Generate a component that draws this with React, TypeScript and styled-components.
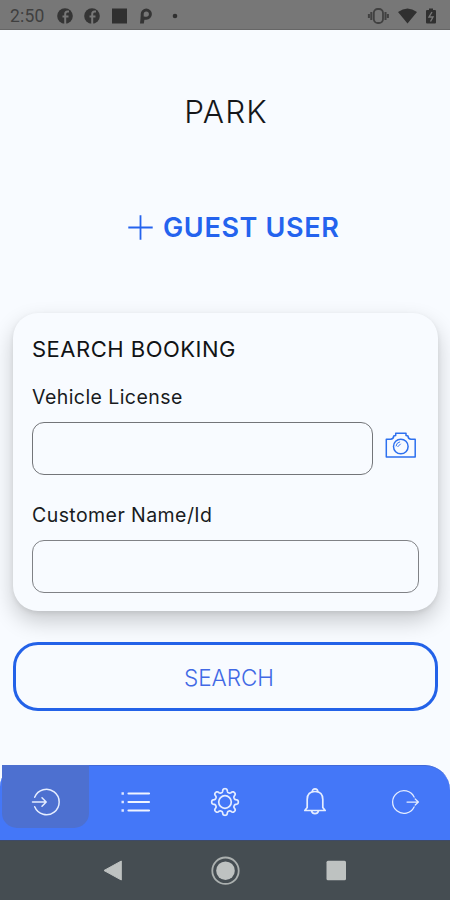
import React from "react";
import styled, { createGlobalStyle } from "styled-components";

const Global = createGlobalStyle`
  * { box-sizing: border-box; }
  body { margin: 0; background: #f8fbff; font-family: Inter, "Liberation Sans", sans-serif; }
`;

const Screen = styled.div`
  width: 450px;
  height: 900px;
  display: flex;
  flex-direction: column;
  background: #f8fbff;
  overflow: hidden;
`;

const StatusBar = styled.header`
  height: 30px;
  flex: none;
  display: flex;
  align-items: center;
  justify-content: space-between;
  padding: 2px 14px 0 10px;
  background: #777777;
  border-bottom: 1px solid #666;
  color: #3f3f3f;
`;

const StatusGroup = styled.div<{ $gap: number }>`
  display: flex;
  align-items: center;
  gap: ${(p) => p.$gap}px;
`;

const Clock = styled.span`
  width: 36px;
  font: 400 17.5px/20px Roboto, sans-serif;
  letter-spacing: 0.2px;
`;

const Glyph = styled.svg`
  display: block;
  flex: none;
  overflow: visible;
`;

const Main = styled.main`
  flex: 1;
  display: flex;
  flex-direction: column;
  padding: 0 12px 0 13px;
`;

const Title = styled.h1`
  margin: 62px 0 0 1px;
  text-align: center;
  font-size: 31.5px;
  font-weight: 300;
  line-height: 40px;
  letter-spacing: 1.1px;
  color: #15171a;
`;

const GuestButton = styled.button`
  margin: 76px 0 0 115px;
  padding: 0;
  height: 40px;
  border: 0;
  background: none;
  display: flex;
  align-items: center;
  gap: 10px;
  color: #2463ee;
  font: 600 27px/40px Inter, sans-serif;
  letter-spacing: 0.65px;
  white-space: nowrap;
`;

const Card = styled.section`
  height: 298px;
  margin-top: 65px;
  padding: 22px 19px 0;
  border-radius: 25px;
  background: #f8fbff;
  box-shadow: 0 10px 22px rgba(0, 0, 0, 0.2), 0 2px 5px rgba(0, 0, 0, 0.08);
`;

const CardTitle = styled.h2`
  margin: 0;
  font-size: 22px;
  font-weight: 400;
  line-height: 28px;
  letter-spacing: 0.5px;
  color: #111315;
`;

const Label = styled.label<{ $top: number }>`
  display: block;
  margin-top: ${(p) => p.$top}px;
  font-size: 19.5px;
  line-height: 26px;
  letter-spacing: 0.43px;
  color: #191b1e;
`;

const FieldRow = styled.div`
  display: flex;
  align-items: center;
  gap: 12px;
  margin-top: 12px;
`;

const Field = styled.input<{ $line: string }>`
  flex: 1;
  min-width: 0;
  height: 53px;
  padding: 0 14px;
  border: 1px solid ${(p) => p.$line};
  border-radius: 12px;
  background: transparent;
  font: 400 19px Inter, sans-serif;
`;

const CameraButton = styled.button`
  width: 34px;
  padding: 0 0 8px;
  border: 0;
  background: none;
`;

const SearchButton = styled.button`
  height: 69px;
  margin-top: 31px;
  border: 3px solid #2362e8;
  border-radius: 25px;
  background: #f8fbff;
  color: #4169e5;
  padding: 2px 0 0 7px;
  font: 300 22.5px/28px Inter, sans-serif;
`;

const TabBar = styled.nav`
  flex: none;
  height: 75px;
  padding-left: 2px;
  display: flex;
  background: #4477f8;
  border-top: 1px solid #4169d8;
  border-radius: 22px 25px 0 0;
`;

const Tab = styled.button<{ $active?: boolean }>`
  width: ${(p) => (p.$active ? 87 : 90)}px;
  height: 63px;
  margin-top: -1px;
  margin-right: ${(p) => (p.$active ? 1 : 0)}px;
  padding: 10px 0 0;
  border: 0;
  border-radius: 0 0 15px 15px;
  background: ${(p) => (p.$active ? "#4d70d0" : "transparent")};
  display: flex;
  align-items: center;
  justify-content: center;
`;

const SystemBar = styled.footer`
  flex: none;
  height: 60px;
  display: flex;
  align-items: center;
  gap: 83px;
  padding-left: 101px;
  background: #454d52;
  border-top: 1px solid #3c4a6a;
`;

const gearPath =
  Array.from({ length: 144 }, (_, i) => {
    const a = (i / 144) * Math.PI * 2;
    const r = 11.6 + 1.75 * Math.tanh(2 * Math.cos(8 * a));
    return `${i ? "L" : "M"}${(15 + r * Math.cos(a)).toFixed(2)} ${(15 + r * Math.sin(a)).toFixed(2)}`;
  }).join("") + "Z";

const Social = () => (
  <Glyph width="16" height="16" viewBox="0 0 16 16">
    <circle cx="8" cy="8" r="7.8" fill="#353535" />
    <path d="M12 3.5h-1.5Q8.2 3.5 8.2 6V16M5.5 8.5h6" fill="none" stroke="#777" strokeWidth="2" />
  </Glyph>
);

const line = { fill: "none", stroke: "#e5edff", strokeWidth: 1.5, strokeLinecap: "round", strokeLinejoin: "round" } as const;

export default function App() {
  return (
    <>
      <Global />
      <Screen>
        <StatusBar>
          <StatusGroup $gap={11}>
            <Clock>2:50</Clock>
            <Social />
            <Social />
            <Glyph width="16" height="16" viewBox="0 0 16 16">
              <path d="M1 .5h15v15H1z" fill="#303030" />
            </Glyph>
            <Glyph width="14" height="16" viewBox="0 0 14 16">
              <path d="M4.2 9.4V6.1a4.1 4.1 0 1 1 4.1 4.1H5.5" fill="none" stroke="#353535" strokeWidth="3" />
              <path d="M2.7 8.7h4.2L5.8 15.5H2z" fill="#353535" />
            </Glyph>
            <Glyph width="20" height="16" viewBox="0 0 20 16">
              <circle cx="12" cy="8" r="2.3" fill="#303030" />
            </Glyph>
          </StatusGroup>
          <StatusGroup $gap={9}>
            <Glyph width="22" height="16" viewBox="0 0 22 16">
              <rect x="6.8" y="1" width="9.2" height="14" rx="4" fill="none" stroke="#414141" strokeWidth="1.8" />
              <path d="M4.3 4v8M18.5 4v8M1.9 6v4M20.9 6v4" stroke="#414141" strokeWidth="2" />
            </Glyph>
            <Glyph width="19" height="16" viewBox="0 0 19 16">
              <path d="M0 4Q9.5-3 19 4L9.5 15.5Z" fill="#303030" />
            </Glyph>
            <Glyph width="10" height="16" viewBox="0 0 10 16">
              <path d="M1 2h2V.5h4V2h2q1 0 1 1v11.5q0 1-1 1H1q-1 0-1-1V3q0-1 1-1Z" fill="#303030" />
              <path d="M6 4 3 9h4l-2.5 4.5" fill="none" stroke="#777" strokeWidth="1.4" />
            </Glyph>
          </StatusGroup>
        </StatusBar>

        <Main>
          <Title>PARK</Title>
          <GuestButton>
            <Glyph width="25" height="25" viewBox="0 0 25 25">
              <path d="M12.5-.7v24.4M.3 11.5h24.4" stroke="#2463ee" strokeWidth="1.8" />
            </Glyph>
            GUEST USER
          </GuestButton>
          <Card>
            <CardTitle>SEARCH BOOKING</CardTitle>
            <Label htmlFor="license" $top={21}>Vehicle License</Label>
            <FieldRow>
              <Field id="license" $line="#737579" />
              <CameraButton aria-label="Scan license">
                <Glyph width="31" height="26" viewBox="0 0 31 26" fill="none" stroke="#2d70ef" strokeWidth="1.5" strokeLinejoin="round">
                  <path d="M1.3 7.2H5.5q3 0 3.2-3.1l2-.5V1.2H21v2.4l2 .5q.2 3.1 3 3.1h4.2v17.9H1.3Z" />
                  <circle cx="15.8" cy="14.5" r="7.3" />
                  <path d="M11 14.3q.4-3.7 4.1-4.5M12.5 15l3.2-3.2" strokeWidth="1" />
                </Glyph>
              </CameraButton>
            </FieldRow>
            <Label htmlFor="customer" $top={27}>Customer Name/Id</Label>
            <FieldRow>
              <Field id="customer" $line="#808286" />
            </FieldRow>
          </Card>
          <SearchButton>SEARCH</SearchButton>
        </Main>

        <TabBar>
          <Tab $active aria-label="Check in">
            <Glyph width="30" height="30" viewBox="0 0 30 30" {...line}>
              <path d="M3.7 10.2a12.7 12.7 0 1 1 0 9.6M1.5 15H15M11 10.8l4.2 4.2-4.2 4.2" />
            </Glyph>
          </Tab>
          <Tab aria-label="Bookings">
            <Glyph width="30" height="30" viewBox="0 0 30 30">
              <path d="M8.5 6.5H29M8.5 15H29M8.5 23.5H29" stroke="#f0f4ff" strokeWidth="2.2" strokeLinecap="round" />
              <path d="M1.5 6.5h2.4M1.5 15h2.4M1.5 23.5h2.4" stroke="#dfe8ff" strokeWidth="2.4" />
            </Glyph>
          </Tab>
          <Tab aria-label="Settings">
            <Glyph width="30" height="30" viewBox="0 0 30 30" {...line}>
              <path d={gearPath} strokeWidth="1.7" />
              <circle cx="15" cy="15" r="6.3" strokeWidth="1.7" />
            </Glyph>
          </Tab>
          <Tab aria-label="Notifications">
            <Glyph width="30" height="30" viewBox="0 0 30 30" {...line}>
              <path d="M7.2 20.5V12.5C7.2 7 10.2 4.5 15 4.5S22.8 7 22.8 12.5V20.5L25.2 23.5H4.8Z" strokeWidth="1.7" />
              <path d="M12.3 4.5a2.7 2.7 0 1 1 5.4 0M11.6 24a3.5 3.5 0 0 0 6.8 0" strokeWidth="1.7" />
            </Glyph>
          </Tab>
          <Tab aria-label="Check out">
            <Glyph width="30" height="30" viewBox="0 0 30 30" {...line} strokeWidth={1.25}>
              <path d="M24.1 10.1a11.3 11.3 0 1 0 0 9.8M17 15h11.2M25.2 12l3.2 3-3.2 3" />
            </Glyph>
          </Tab>
        </TabBar>
        <SystemBar>
          <Glyph width="26" height="30" viewBox="0 0 26 30">
            <path d="M3 14.5 20.3 5v19Z" fill="#bec2c1" stroke="#bec2c1" strokeLinejoin="round" />
          </Glyph>
          <Glyph width="30" height="30" viewBox="0 0 30 30">
            <circle cx="15.5" cy="14.7" r="13.2" fill="none" stroke="#abb0af" strokeWidth="1.8" />
            <circle cx="15.5" cy="14.7" r="9.3" fill="#bec2c1" />
          </Glyph>
          <Glyph width="24" height="30" viewBox="0 0 24 30">
            <rect x="3.5" y="4.7" width="19.5" height="19.5" rx="1.5" fill="#bec2c1" />
          </Glyph>
        </SystemBar>
      </Screen>
    </>
  );
}
